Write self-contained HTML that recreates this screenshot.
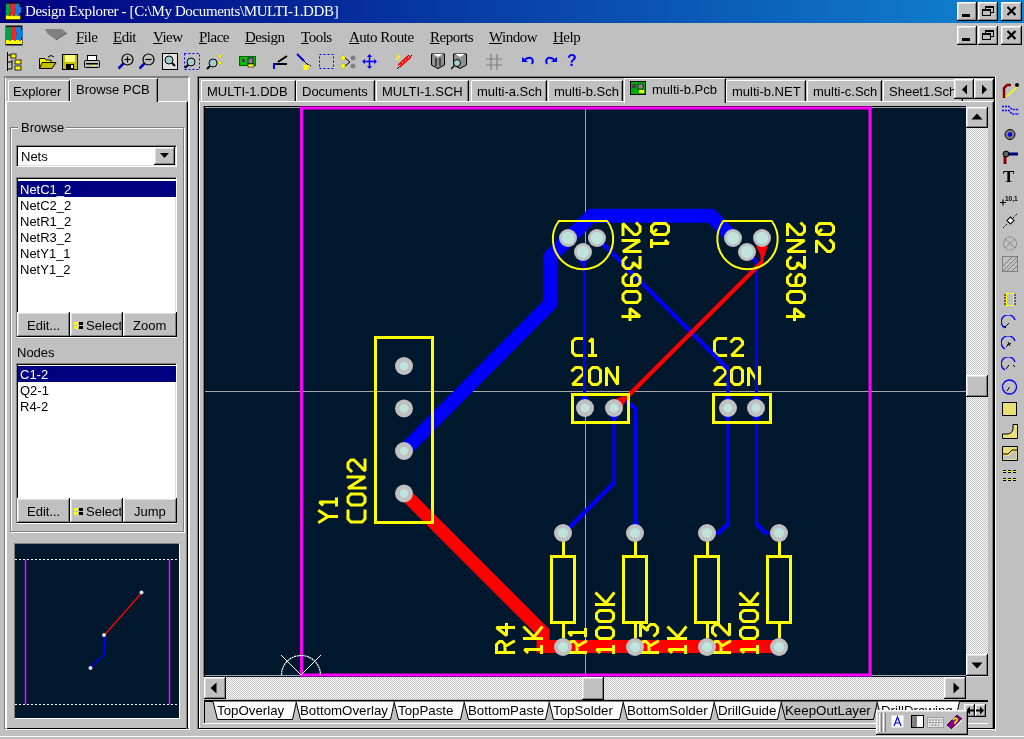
<!DOCTYPE html><html><head><meta charset="utf-8"><style>
*{margin:0;padding:0;box-sizing:border-box}
html,body{width:1024px;height:739px;overflow:hidden;background:#c0c0c0;position:relative}
div,span,svg{position:absolute}
span{will-change:transform;white-space:nowrap;font:13px "Liberation Sans",sans-serif;color:#000;line-height:15px}
.rz{background:#c0c0c0;box-shadow:inset -1px -1px 0 #000,inset 1px 1px 0 #fff,inset -2px -2px 0 #808080,inset 2px 2px 0 #dfdfdf}
.sk{box-shadow:inset 1px 1px 0 #808080,inset -1px -1px 0 #fff,inset 2px 2px 0 #000,inset -2px -2px 0 #dfdfdf}
.sv{font:15px "Liberation Serif",serif;letter-spacing:-0.4px;line-height:17px}
u{text-decoration:underline;text-underline-offset:1px}
</style></head><body>
<div style="left:0px;top:0px;width:1024px;height:23px;background:linear-gradient(to right,#000080,#1084d0)"></div>
<span style="left:25px;top:3px;color:#fff;font:15px Liberation Serif,serif;letter-spacing:-0.37px;line-height:17px">Design Explorer - [C:\My Documents\MULTI-1.DDB]</span>
<div class="rz" style="left:957px;top:2px;width:20px;height:19px;"></div>
<div class="rz" style="left:978px;top:2px;width:20px;height:19px;"></div>
<div class="rz" style="left:1001px;top:2px;width:21px;height:19px;"></div>
<div class="rz" style="left:957px;top:26px;width:20px;height:19px;"></div>
<div class="rz" style="left:978px;top:26px;width:20px;height:19px;"></div>
<div class="rz" style="left:1001px;top:26px;width:21px;height:19px;"></div>
<div style="left:962px;top:14px;width:8px;height:3px;background:#000"></div>
<div style="left:985px;top:6px;width:9px;height:7px;border:1px solid #000;border-top-width:2px"></div>
<div style="left:982px;top:9px;width:9px;height:7px;border:1px solid #000;border-top-width:2px;background:#c0c0c0"></div>
<svg style="left:1006px;top:6px" width="11" height="10" viewBox="0 0 11 10"><path d="M1.5 1 L9.5 9 M9.5 1 L1.5 9" stroke="#000" stroke-width="2.2"/></svg>
<div style="left:962px;top:38px;width:8px;height:3px;background:#000"></div>
<div style="left:985px;top:30px;width:9px;height:7px;border:1px solid #000;border-top-width:2px"></div>
<div style="left:982px;top:33px;width:9px;height:7px;border:1px solid #000;border-top-width:2px;background:#c0c0c0"></div>
<svg style="left:1006px;top:30px" width="11" height="10" viewBox="0 0 11 10"><path d="M1.5 1 L9.5 9 M9.5 1 L1.5 9" stroke="#000" stroke-width="2.2"/></svg>
<svg style="left:4px;top:2px" width="19" height="19" viewBox="0 0 19 21"><rect x="0.5" y="0.5" width="17" height="20" fill="#111"/><path d="M1 2H6V7L7 9L6 11V15H1Z" fill="#00a050"/><path d="M6 2H11V7L12 9L11 11V15H6V11L7 9L6 7Z" fill="#ff2020"/><path d="M11 2H16V5L18 6V12L16 12V15H11V11L12 9L11 7Z" fill="#1080e0"/><path d="M1 15H4L5 16L6 15H9L10 16L11 15H14L15 16L16 15H17V19H1Z" fill="#ff0"/></svg>
<svg style="left:5px;top:25px" width="19" height="21" viewBox="0 0 19 21"><rect x="0.5" y="0.5" width="17" height="20" fill="#111"/><path d="M1 2H6V7L7 9L6 11V15H1Z" fill="#00a050"/><path d="M6 2H11V7L12 9L11 11V15H6V11L7 9L6 7Z" fill="#ff2020"/><path d="M11 2H16V5L18 6V12L16 12V15H11V11L12 9L11 7Z" fill="#1080e0"/><path d="M1 15H4L5 16L6 15H9L10 16L11 15H14L15 16L16 15H17V19H1Z" fill="#ff0"/></svg>
<svg style="left:44px;top:28px" width="24" height="13"><path d="M1 1H18L23 5L12 12L3 5Z" fill="#808080"/><path d="M12 12L23 5" stroke="#303030" stroke-width="1" stroke-dasharray="1.5 1"/></svg>
<svg style="left:6px;top:52px" width="16" height="19" viewBox="0 0 16 19"><path d="M1.5 0V19M1.5 3H5M1.5 10H6M1.5 17H6M6 8V17" stroke="#000" stroke-width="1" fill="none"/><rect x="5" y="2" width="5" height="4" fill="#ff0" stroke="#000" stroke-width="0.8"/><rect x="9" y="8" width="6" height="4" fill="#ff0" stroke="#000" stroke-width="0.8"/><rect x="9" y="14" width="6" height="4" fill="#ff0" stroke="#000" stroke-width="0.8"/></svg>
<svg style="left:39px;top:54px" width="18" height="15" viewBox="0 0 18 15"><path d="M0.5 4.5H6L7 6H12V14.5H0.5Z" fill="#ff0" stroke="#000" stroke-width="1"/><path d="M3 8.5H17L13 14.5H0.5Z" fill="#c0c000" stroke="#000" stroke-width="1"/><path d="M9 3Q12 0 15 3" stroke="#000" fill="none"/></svg>
<svg style="left:62px;top:54px" width="16" height="16" viewBox="0 0 16 16"><rect x="0.5" y="0.5" width="15" height="15" fill="#c0c000" stroke="#000"/><rect x="3" y="1" width="10" height="7" fill="#ffff80"/><rect x="4" y="10" width="8" height="5" fill="#000"/><rect x="9" y="11" width="2" height="3" fill="#fff"/></svg>
<svg style="left:84px;top:55px" width="16" height="14" viewBox="0 0 16 14"><rect x="3.5" y="0.5" width="9" height="5" fill="#fff" stroke="#000"/><rect x="0.5" y="5.5" width="15" height="7" rx="1" fill="#c0c0c0" stroke="#000"/><rect x="2" y="8" width="12" height="1.5" fill="#000"/><rect x="8" y="10" width="4" height="1" fill="#ff0"/></svg>
<svg style="left:117px;top:53px" width="17" height="17" viewBox="0 0 17 17"><circle cx="10.5" cy="6.5" r="5.5" fill="#c0c0c0" stroke="#000" stroke-width="1.2"/><path d="M7.5 6.5H13.5M10.5 3.5V9.5" stroke="#000" stroke-width="1.2"/><path d="M6.5 10.5L1.5 15.5" stroke="#0000c0" stroke-width="2.5"/></svg>
<svg style="left:138px;top:53px" width="17" height="17" viewBox="0 0 17 17"><circle cx="10.5" cy="6.5" r="5.5" fill="#c0c0c0" stroke="#000" stroke-width="1.2"/><path d="M7.5 6.5H13.5" stroke="#000" stroke-width="1.2"/><path d="M6.5 10.5L1.5 15.5" stroke="#0000c0" stroke-width="2.5"/></svg>
<svg style="left:162px;top:53px" width="16" height="17" viewBox="0 0 16 17"><rect x="0.5" y="0.5" width="15" height="16" fill="#e0e0e0" stroke="#000"/><circle cx="7" cy="7" r="4" fill="#a0d0d0" stroke="#000"/><path d="M10 10L13 13" stroke="#000" stroke-width="2"/></svg>
<svg style="left:184px;top:53px" width="16" height="17" viewBox="0 0 16 17"><rect x="0.5" y="0.5" width="15" height="16" fill="none" stroke="#00f" stroke-dasharray="2 2"/><circle cx="7" cy="9" r="4" fill="#a0d0d0" stroke="#000"/><path d="M4 12L1 15" stroke="#000" stroke-width="2"/></svg>
<svg style="left:206px;top:53px" width="17" height="17" viewBox="0 0 17 17"><circle cx="7" cy="10" r="4" fill="#a0d0d0" stroke="#000"/><path d="M4 13L1 16" stroke="#000" stroke-width="2"/><path d="M14 1L16 3L14 5L12 3Z M14 8L16 10L14 12L12 10Z" fill="#ff0" stroke="#aa0" stroke-width="0.5"/></svg>
<svg style="left:239px;top:56px" width="17" height="12" viewBox="0 0 17 12"><rect x="0.5" y="0.5" width="16" height="9" fill="#00c000" stroke="#006000"/><rect x="3" y="3" width="3" height="3" fill="#404040"/><rect x="9" y="2" width="5" height="6" fill="#808080" stroke="#000" stroke-width="0.7"/><rect x="9" y="8" width="6" height="3" fill="#ff0" stroke="#000" stroke-width="0.6"/></svg>
<svg style="left:273px;top:53px" width="15" height="17" viewBox="0 0 15 17"><path d="M14 3L5 9M1 11H14" stroke="#000" stroke-width="2"/><path d="M1 10V16" stroke="#00f" stroke-width="2"/></svg>
<svg style="left:296px;top:53px" width="16" height="18" viewBox="0 0 16 18"><path d="M1 1L8 8" stroke="#00c" stroke-width="2"/><path d="M8 8L11 11L15 13" stroke="#000" stroke-width="1" fill="none"/><path d="M7 12H14L11 17H8Z" fill="#ff0"/></svg>
<svg style="left:319px;top:54px" width="15" height="15" viewBox="0 0 15 15"><rect x="0.5" y="0.5" width="14" height="14" fill="none" stroke="#00f" stroke-dasharray="2 2"/></svg>
<svg style="left:340px;top:55px" width="16" height="14" viewBox="0 0 16 14"><circle cx="3" cy="3" r="2.5" fill="#ff0" stroke="#888" stroke-width="0.5"/><circle cx="3" cy="11" r="2.5" fill="#ff0" stroke="#888" stroke-width="0.5"/><circle cx="13" cy="3" r="2.5" fill="#808080"/><circle cx="13" cy="11" r="2.5" fill="#808080"/><path d="M5 3L10 7L5 11" stroke="#000" fill="none"/></svg>
<svg style="left:362px;top:54px" width="15" height="15" viewBox="0 0 15 15"><path d="M7.5 1V14M1 7.5H14" stroke="#00f" stroke-width="1.5"/><path d="M7.5 0L5 3H10Z M7.5 15L5 12H10Z M0 7.5L3 5V10Z M15 7.5L12 5V10Z" fill="#00f"/></svg>
<svg style="left:395px;top:53px" width="18" height="18" viewBox="0 0 18 18"><path d="M2 16L17 2" stroke="#000" stroke-width="1"/><path d="M4 13L15 3" stroke="#f00" stroke-width="4"/><path d="M4 13L15 3" stroke="#fff" stroke-width="1" stroke-dasharray="2 2"/><path d="M1 3L5 5M3 1L5 4M0 6L4 6" stroke="#ff0" stroke-width="1"/></svg>
<svg style="left:431px;top:53px" width="14" height="16" viewBox="0 0 14 16"><path d="M0.5 1H13.5V12L7 15.5L0.5 12Z" fill="#909090" stroke="#000"/><path d="M2 1L7 4L12 1" fill="#fff"/><path d="M5 5V13M9 5V13" stroke="#000"/></svg>
<svg style="left:451px;top:53px" width="16" height="17" viewBox="0 0 16 17"><path d="M2.5 1H15.5V12L9 15.5L2.5 12Z" fill="#909090" stroke="#000"/><path d="M4 1L9 4L14 1" fill="#fff"/><circle cx="6" cy="10" r="3.5" fill="#a0d0d0" stroke="#000"/><path d="M3 13L0 16" stroke="#000" stroke-width="1.5"/></svg>
<svg style="left:486px;top:54px" width="16" height="16" viewBox="0 0 16 16"><path d="M5 0V16M11 0V16M0 5H16M0 11H16" stroke="#808080" stroke-width="1.2"/></svg>
<svg style="left:522px;top:56px" width="13" height="10" viewBox="0 0 13 10"><path d="M3 3.5Q6 1 9 2Q12 4 10 8" stroke="#00f" stroke-width="2" fill="none"/><path d="M0 1L6 6H0Z" fill="#00f"/></svg>
<svg style="left:543px;top:56px" width="14" height="10" viewBox="0 0 14 10"><path d="M11 3.5Q8 1 5 2Q2 4 4 8" stroke="#00f" stroke-width="2" fill="none"/><path d="M14 1L8 6H14Z" fill="#00f"/></svg>
<span style="left:567px;top:52px;font:bold 16px Liberation Sans,sans-serif;color:#00f;line-height:18px">?</span>
<span style="left:76px;top:29px;font:15px Liberation Serif,serif;letter-spacing:-0.5px;line-height:17px"><u>F</u>ile</span>
<span style="left:113px;top:29px;font:15px Liberation Serif,serif;letter-spacing:-0.5px;line-height:17px"><u>E</u>dit</span>
<span style="left:153px;top:29px;font:15px Liberation Serif,serif;letter-spacing:-0.5px;line-height:17px"><u>V</u>iew</span>
<span style="left:199px;top:29px;font:15px Liberation Serif,serif;letter-spacing:-0.5px;line-height:17px"><u>P</u>lace</span>
<span style="left:245px;top:29px;font:15px Liberation Serif,serif;letter-spacing:-0.5px;line-height:17px"><u>D</u>esign</span>
<span style="left:301px;top:29px;font:15px Liberation Serif,serif;letter-spacing:-0.5px;line-height:17px"><u>T</u>ools</span>
<span style="left:349px;top:29px;font:15px Liberation Serif,serif;letter-spacing:-0.5px;line-height:17px"><u>A</u>uto Route</span>
<span style="left:430px;top:29px;font:15px Liberation Serif,serif;letter-spacing:-0.5px;line-height:17px"><u>R</u>eports</span>
<span style="left:489px;top:29px;font:15px Liberation Serif,serif;letter-spacing:-0.5px;line-height:17px"><u>W</u>indow</span>
<span style="left:553px;top:29px;font:15px Liberation Serif,serif;letter-spacing:-0.5px;line-height:17px"><u>H</u>elp</span>
__TOOLBAR__
<div style="left:4px;top:76px;width:186px;height:654px;border-left:1px solid #808080;border-top:1px solid #808080;border-right:1px solid #fff;border-bottom:1px solid #fff"></div>
<div style="left:5px;top:77px;width:184px;height:652px;border-left:1px solid #fff;border-top:1px solid #808080;border-right:1px solid #fff;border-bottom:1px solid #000"></div>
<div style="left:6px;top:101px;width:182px;height:628px;border-left:1px solid #fff;border-top:1px solid #fff;border-right:1px solid #000;box-shadow:inset -1px 0 0 #808080"></div>
<div style="left:8px;top:80px;width:62px;height:21px;border-left:1px solid #fff;border-top:1px solid #fff;border-right:1px solid #000;box-shadow:inset -1px 0 0 #808080;border-top-left-radius:2px"></div>
<span style="left:13px;top:84px;">Explorer</span>
<div style="left:70px;top:78px;width:88px;height:24px;background:#c0c0c0;border-left:1px solid #fff;border-top:1px solid #fff;border-right:1px solid #000;box-shadow:inset -1px 0 0 #808080;border-top-left-radius:2px"></div>
<span style="left:76px;top:82px;">Browse PCB</span>
<div style="left:10px;top:127px;width:174px;height:405px;border:1px solid #808080;box-shadow:1px 1px 0 #fff,inset 1px 1px 0 #fff"></div>
<div style="left:18px;top:120px;width:48px;height:14px;background:#c0c0c0"></div>
<span style="left:21px;top:120px;">Browse</span>
<div style="left:16px;top:145px;width:161px;height:22px;background:#fff;border-left:1px solid #808080;border-top:1px solid #808080;border-right:1px solid #fff;border-bottom:1px solid #fff;box-shadow:inset 1px 1px 0 #000,inset -1px -1px 0 #dfdfdf"></div>
<span style="left:21px;top:149px;">Nets</span>
<div class="rz" style="left:154px;top:147px;width:21px;height:18px;"></div>
<svg style="left:159px;top:153px" width="11" height="6"><path d="M1 0h9l-4.5 5z" fill="#000"/></svg>
<div style="left:16px;top:177px;width:161px;height:161px;background:#fff;border-left:1px solid #808080;border-top:1px solid #808080;border-right:1px solid #fff;border-bottom:1px solid #fff;box-shadow:inset 1px 1px 0 #000,inset -1px -1px 0 #dfdfdf"></div>
<div style="left:18px;top:181px;width:158px;height:16px;background:#000080"></div>
<span style="left:20px;top:182px;color:#fff">NetC1_2</span>
<span style="left:20px;top:198px;color:#000">NetC2_2</span>
<span style="left:20px;top:214px;color:#000">NetR1_2</span>
<span style="left:20px;top:230px;color:#000">NetR3_2</span>
<span style="left:20px;top:246px;color:#000">NetY1_1</span>
<span style="left:20px;top:262px;color:#000">NetY1_2</span>
<div class="rz" style="left:17px;top:312px;width:53px;height:25px;"></div>
<div class="rz" style="left:70px;top:312px;width:53px;height:25px;"></div>
<div class="rz" style="left:123px;top:312px;width:54px;height:25px;"></div>
<span style="left:27px;top:318px;">Edit...</span>
<div style="left:74px;top:322px;width:4px;height:3px;background:#ff0;box-shadow:0 4px 0 #ff0"></div>
<div style="left:79px;top:322px;width:4px;height:3px;background:#000;box-shadow:0 4px 0 #000"></div>
<div style="left:86px;top:318px;width:35px;height:16px;overflow:hidden"><span style="left:0;top:0">Select</span></div>
<span style="left:133px;top:318px;">Zoom</span>
<span style="left:17px;top:345px;">Nodes</span>
<div style="left:16px;top:363px;width:161px;height:161px;background:#fff;border-left:1px solid #808080;border-top:1px solid #808080;border-right:1px solid #fff;border-bottom:1px solid #fff;box-shadow:inset 1px 1px 0 #000,inset -1px -1px 0 #dfdfdf"></div>
<div style="left:18px;top:366px;width:158px;height:16px;background:#000080"></div>
<span style="left:20px;top:367px;color:#fff">C1-2</span>
<span style="left:20px;top:383px;color:#000">Q2-1</span>
<span style="left:20px;top:399px;color:#000">R4-2</span>
<div class="rz" style="left:17px;top:498px;width:53px;height:25px;"></div>
<div class="rz" style="left:70px;top:498px;width:53px;height:25px;"></div>
<div class="rz" style="left:123px;top:498px;width:54px;height:25px;"></div>
<span style="left:27px;top:504px;">Edit...</span>
<div style="left:74px;top:508px;width:4px;height:3px;background:#ff0;box-shadow:0 4px 0 #ff0"></div>
<div style="left:79px;top:508px;width:4px;height:3px;background:#000;box-shadow:0 4px 0 #000"></div>
<div style="left:86px;top:504px;width:35px;height:16px;overflow:hidden"><span style="left:0;top:0">Select</span></div>
<span style="left:134px;top:504px;">Jump</span>
<div style="left:14px;top:543px;width:166px;height:176px;background:#00182e;border-left:1px solid #808080;border-top:1px solid #808080;border-right:1px solid #fff;border-bottom:1px solid #fff"></div>
<svg style="left:15px;top:544px" width="164" height="174">
<path d="M0 15.5H164M0 160.5H164" stroke="#fff" stroke-width="1" stroke-dasharray="2 2"/>
<path d="M10.5 15V161M154.5 15V161" stroke="#f0f" stroke-width="1.5"/>
<path d="M126.5 49L89.5 91" stroke="#f00" stroke-width="1.3"/>
<path d="M89.5 91V110L75.5 124" stroke="#00f" stroke-width="1.6" fill="none"/>
<circle cx="126.5" cy="48.5" r="2" fill="#ddd"/><circle cx="89" cy="91" r="2" fill="#ddd"/><circle cx="75.5" cy="124" r="2" fill="#ddd"/>
</svg>
<div style="left:197px;top:76px;width:799px;height:654px;border-left:1px solid #808080;border-top:1px solid #808080;border-right:1px solid #fff;border-bottom:1px solid #fff"></div>
<div style="left:198px;top:77px;width:797px;height:652px;border-left:1px solid #000;border-top:1px solid #000;border-right:1px solid #000;border-bottom:1px solid #000"></div>
<div style="left:199px;top:101px;width:795px;height:627px;border-left:1px solid #fff;border-top:1px solid #fff;border-right:1px solid #000;box-shadow:inset -1px 0 0 #808080"></div>
<div style="left:201px;top:80px;width:95px;height:21px;border-left:1px solid #fff;border-top:1px solid #fff;border-right:1px solid #000;box-shadow:inset -1px 0 0 #808080;border-top-left-radius:2px;overflow:hidden"><span style="left:5px;top:3px">MULTI-1.DDB</span></div>
<div style="left:296px;top:80px;width:79px;height:21px;border-left:1px solid #fff;border-top:1px solid #fff;border-right:1px solid #000;box-shadow:inset -1px 0 0 #808080;border-top-left-radius:2px;overflow:hidden"><span style="left:5px;top:3px">Documents</span></div>
<div style="left:376px;top:80px;width:93px;height:21px;border-left:1px solid #fff;border-top:1px solid #fff;border-right:1px solid #000;box-shadow:inset -1px 0 0 #808080;border-top-left-radius:2px;overflow:hidden"><span style="left:5px;top:3px">MULTI-1.SCH</span></div>
<div style="left:471px;top:80px;width:76px;height:21px;border-left:1px solid #fff;border-top:1px solid #fff;border-right:1px solid #000;box-shadow:inset -1px 0 0 #808080;border-top-left-radius:2px;overflow:hidden"><span style="left:5px;top:3px">multi-a.Sch</span></div>
<div style="left:548px;top:80px;width:75px;height:21px;border-left:1px solid #fff;border-top:1px solid #fff;border-right:1px solid #000;box-shadow:inset -1px 0 0 #808080;border-top-left-radius:2px;overflow:hidden"><span style="left:5px;top:3px">multi-b.Sch</span></div>
<div style="left:726px;top:80px;width:80px;height:21px;border-left:1px solid #fff;border-top:1px solid #fff;border-right:1px solid #000;box-shadow:inset -1px 0 0 #808080;border-top-left-radius:2px;overflow:hidden"><span style="left:5px;top:3px">multi-b.NET</span></div>
<div style="left:807px;top:80px;width:75px;height:21px;border-left:1px solid #fff;border-top:1px solid #fff;border-right:1px solid #000;box-shadow:inset -1px 0 0 #808080;border-top-left-radius:2px;overflow:hidden"><span style="left:5px;top:3px">multi-c.Sch</span></div>
<div style="left:883px;top:80px;width:80px;height:21px;border-left:1px solid #fff;border-top:1px solid #fff;border-right:1px solid #000;box-shadow:inset -1px 0 0 #808080;border-top-left-radius:2px;overflow:hidden"><span style="left:5px;top:3px">Sheet1.Sch</span></div>
<div style="left:624px;top:78px;width:102px;height:25px;background:#c0c0c0;border-left:1px solid #fff;border-top:1px solid #fff;border-right:1px solid #000;box-shadow:inset -1px 0 0 #808080;border-top-left-radius:2px"></div>
<svg style="left:630px;top:81px" width="16" height="14"><rect x="0.5" y="0.5" width="15" height="13" fill="#0a0" stroke="#000"/><rect x="2" y="3" width="4" height="4" fill="#444"/><rect x="8" y="3" width="5" height="5" fill="#888" stroke="#000" stroke-width="0.6"/><rect x="9" y="9" width="5" height="3" fill="#ff0"/></svg>
<span style="left:652px;top:82px;">multi-b.Pcb</span>
<div class="rz" style="left:954px;top:79px;width:20px;height:20px;"></div>
<div class="rz" style="left:974px;top:79px;width:20px;height:20px;"></div>
<svg style="left:960px;top:84px" width="10" height="11"><path d="M7 0.5v10l-5-5z" fill="#000"/></svg>
<svg style="left:980px;top:84px" width="10" height="11"><path d="M2 0.5v10l5-5z" fill="#000"/></svg>
<div style="left:203px;top:106px;width:764px;height:572px;border-left:1px solid #808080;border-top:1px solid #808080;border-right:1px solid #fff;border-bottom:1px solid #fff"></div>
<div style="left:966px;top:107px;width:22px;height:570px;background-color:#e0e0e0;background-image:repeating-conic-gradient(#c0c0c0 0 25%,#fff 0 50%);background-size:2px 2px"></div>
<div class="rz" style="left:966px;top:107px;width:22px;height:21px;"></div>
<svg style="left:971px;top:113px" width="12" height="7"><path d="M0.5 6.5h11l-5.5-6z" fill="#000"/></svg>
<div class="rz" style="left:966px;top:375px;width:22px;height:22px;"></div>
<div class="rz" style="left:966px;top:654px;width:22px;height:22px;"></div>
<svg style="left:971px;top:662px" width="12" height="7"><path d="M0.5 0.5h11l-5.5 6z" fill="#000"/></svg>
<div style="left:204px;top:677px;width:762px;height:22px;background-color:#e0e0e0;background-image:repeating-conic-gradient(#c0c0c0 0 25%,#fff 0 50%);background-size:2px 2px"></div>
<div class="rz" style="left:204px;top:677px;width:22px;height:22px;"></div>
<svg style="left:210px;top:682px" width="7" height="12"><path d="M6.5 0.5v11l-6-5.5z" fill="#000"/></svg>
<div class="rz" style="left:582px;top:677px;width:22px;height:23px;"></div>
<div class="rz" style="left:944px;top:677px;width:22px;height:22px;"></div>
<svg style="left:953px;top:682px" width="7" height="12"><path d="M0.5 0.5v11l6-5.5z" fill="#000"/></svg>
<div style="left:966px;top:677px;width:22px;height:22px;background:#c0c0c0"></div>
<div style="left:204px;top:700px;width:784px;height:2px;background:#000"></div>
<div style="left:204px;top:702px;width:1px;height:21px;background:#000"></div>
<div style="left:203px;top:723px;width:785px;height:1px;background:#fff"></div>
<svg style="left:204px;top:700px" width="784" height="24" viewBox="204 700 784 24"><path d="M213 701.5L217.5 719.5H292.5L296.5 701.5" fill="#fff" stroke="#000" stroke-width="1"/><path d="M296 701.5L300.5 719.5H390.5L394.5 701.5" fill="#fff" stroke="#000" stroke-width="1"/><path d="M394 701.5L398.5 719.5H460.5L464.5 701.5" fill="#fff" stroke="#000" stroke-width="1"/><path d="M464 701.5L468.5 719.5H545.5L549.5 701.5" fill="#fff" stroke="#000" stroke-width="1"/><path d="M549 701.5L553.5 719.5H619.5L623.5 701.5" fill="#fff" stroke="#000" stroke-width="1"/><path d="M623 701.5L627.5 719.5H710.5L714.5 701.5" fill="#fff" stroke="#000" stroke-width="1"/><path d="M714 701.5L718.5 719.5H777.5L781.5 701.5" fill="#fff" stroke="#000" stroke-width="1"/><path d="M781 701.5L785.5 719.5H873.5L877.5 701.5" fill="#c0c0c0" stroke="#000" stroke-width="1"/><path d="M877 701.5L881.5 719.5H955.5L959.5 701.5" fill="#fff" stroke="#000" stroke-width="1"/></svg>
<span style="left:217px;top:703px;font-size:13.3px;line-height:16px">TopOverlay</span>
<span style="left:300px;top:703px;font-size:13.3px;line-height:16px">BottomOverlay</span>
<span style="left:398px;top:703px;font-size:13.3px;line-height:16px">TopPaste</span>
<span style="left:468px;top:703px;font-size:13.3px;line-height:16px">BottomPaste</span>
<span style="left:553px;top:703px;font-size:13.3px;line-height:16px">TopSolder</span>
<span style="left:627px;top:703px;font-size:13.3px;line-height:16px">BottomSolder</span>
<span style="left:718px;top:703px;font-size:13.3px;line-height:16px">DrillGuide</span>
<span style="left:785px;top:703px;font-size:13.3px;line-height:16px">KeepOutLayer</span>
<span style="left:881px;top:703px;font-size:13.3px;line-height:16px">DrillDrawing</span>
<div class="rz" style="left:964px;top:704px;width:11px;height:13px;"></div>
<div class="rz" style="left:975px;top:704px;width:11px;height:13px;"></div>
<svg style="left:965px;top:706px" width="20" height="9"><path d="M1 4.5L5 0.5V8.5Z M5 3.5H9V5.5H5Z M19 4.5L15 0.5V8.5Z M11 3.5H15V5.5H11Z" fill="#000"/></svg>
<div class="rz" style="left:876px;top:710px;width:92px;height:25px;"></div>
<div style="left:879px;top:713px;width:3px;height:19px;border-left:1px solid #fff;border-right:1px solid #808080"></div>
<div style="left:883px;top:713px;width:3px;height:19px;border-left:1px solid #fff;border-right:1px solid #808080"></div>
<svg style="left:891px;top:715px" width="13" height="14"><rect x="0" y="0" width="13" height="13" fill="#fff" stroke="#c0c0c0"/><path d="M3 11L6.5 2L10 11M4.5 8H8.5" stroke="#00f" stroke-width="1.2" fill="none"/></svg>
<svg style="left:911px;top:715px" width="13" height="14"><rect x="0.5" y="0.5" width="12" height="12" fill="#fff" stroke="#000"/><rect x="1" y="1" width="5" height="11" fill="#808080"/></svg>
<svg style="left:927px;top:717px" width="17" height="11"><rect x="0.5" y="0.5" width="16" height="10" fill="#e0e0e0" stroke="#a0a0a0"/><path d="M2 3H15M2 5.5H15M4 8H13" stroke="#808080" stroke-dasharray="2 1"/></svg>
<svg style="left:946px;top:714px" width="17" height="16"><path d="M1 11L11 1L16 5L6 15Z" fill="#800080" stroke="#400040"/><path d="M6 15L16 5V7L6 16Z" fill="#fff"/><path d="M7 6Q9 3 11 5Q12 7 9 8V10" stroke="#ff0" stroke-width="1.5" fill="none"/></svg>
<div style="left:0px;top:736px;width:1024px;height:1px;background:#fff"></div>
<svg style="left:204px;top:106px" width="762" height="571" viewBox="204 106 762 571">
<rect x="204" y="106" width="762" height="571" fill="#00182e"/>
<path d="M204 106.5H966M204.5 106V677" stroke="#000" stroke-width="1"/>
<path d="M205 107.5H966M205 675.5H966" stroke="#a8a0b0" stroke-width="1"/>
<path d="M585.5 107V677M205 391.5H966" stroke="#a8a8a8" stroke-width="1"/>
<path d="M301.5 108V675M870 108V675M300 108H872M300 675H872" stroke="#f0f" stroke-width="3" fill="none"/>
<path d="M281.5 675A19.5 19.5 0 0 1 320.5 675" stroke="#fff" stroke-width="1.2" fill="none" stroke-dasharray="2 0.6"/>
<path d="M281 655L301 675L321 655" stroke="#fff" stroke-width="1" fill="none"/>
<g stroke="#ff0" fill="none" stroke-width="3" stroke-linejoin="miter" stroke-miterlimit="1.5" stroke-linecap="square">
<path transform="translate(572.5 338.5)" d="M11 0H3L0 3V14L3 17H11"/><path transform="translate(589.5 338.5)" d="M0.5 2.5L3 0V17M0 17H6"/>
<path transform="translate(572.5 367.5)" d="M0 3L3 0H8L11 3V6L0 17H11"/><path transform="translate(589.5 367.5)" d="M3 0H8L11 3V14L8 17H3L0 14V3Z"/><path transform="translate(606.5 367.5)" d="M0 17V0L11 17V0"/>
<path transform="translate(714.5 338.5)" d="M11 0H3L0 3V14L3 17H11"/><path transform="translate(731.5 338.5)" d="M0 3L3 0H8L11 3V6L0 17H11"/>
<path transform="translate(714.5 367.5)" d="M0 3L3 0H8L11 3V6L0 17H11"/><path transform="translate(731.5 367.5)" d="M3 0H8L11 3V14L8 17H3L0 14V3Z"/><path transform="translate(748.5 367.5)" d="M0 17V0L11 17V0"/>
</g>
<g stroke="#00f" fill="none" stroke-linejoin="miter">
<path d="M404 451L550 304V257L591.5 215.8H711L733 238" stroke-width="14"/>
</g>
<path d="M584.5 252V408 M728 369V524 M719 533H707 M756.5 261.5V524 M765.5 533H779 M614 408V483 M635.5 409V533" stroke="#00f" stroke-width="3" stroke-linecap="square"/>
<path d="M597 238L728 369 M728 524L719 533 M747 252L756.5 261.5 M756.5 524L765.5 533 M614 483L563 534 M622 397L635.5 409" stroke="#00f" stroke-width="4.2"/>
<path d="M577 257H589L583 267Z M608 413H620L614 423Z M722 413H734L728 423Z M750.5 413H762.5L756.5 423Z M722 403H734L728 393Z M750.5 403H762.5L756.5 393Z M578.5 403H590.5L584.5 393Z M629.5 528H641.5L635.5 518Z" fill="#00f"/>
<g stroke="#f00" fill="none" stroke-linejoin="miter">
<path d="M404 493L543 632V646.5H779" stroke-width="13"/>
<path d="M762 238V262" stroke-width="3"/>
<path d="M762 262L614 410" stroke-width="4.2"/>
</g>
<path d="M756 246H768L763 260Z M608 402L628 394L620 414Z" fill="#f00"/>
<g stroke="#ff0" fill="none" stroke-width="3" stroke-linejoin="miter" stroke-miterlimit="1.5" stroke-linecap="square">
<path transform="translate(640 223.5) rotate(90)" d="M0 3L3 0H8L11 3V6L0 17H11"/><path transform="translate(640 240.5) rotate(90)" d="M0 17V0L11 17V0"/><path transform="translate(640 257.5) rotate(90)" d="M0 0H11L5 7H8L11 10V14L8 17H3L0 14"/><path transform="translate(640 274.5) rotate(90)" d="M11 8.5H3L0 5.5V3L3 0H8L11 3V14L8 17H3L0 14"/><path transform="translate(640 291.5) rotate(90)" d="M3 0H8L11 3V14L8 17H3L0 14V3Z"/><path transform="translate(640 308.5) rotate(90)" d="M8 17V0L0 10H11"/>
<path transform="translate(668.5 223.5) rotate(90)" d="M3 0H8L11 3V14L8 17H3L0 14V3ZM6.5 12.5L9.5 15.5"/><path transform="translate(668.5 240.5) rotate(90)" d="M0.5 2.5L3 0V17M0 17H6"/>
<path transform="translate(804.5 223.5) rotate(90)" d="M0 3L3 0H8L11 3V6L0 17H11"/><path transform="translate(804.5 240.5) rotate(90)" d="M0 17V0L11 17V0"/><path transform="translate(804.5 257.5) rotate(90)" d="M0 0H11L5 7H8L11 10V14L8 17H3L0 14"/><path transform="translate(804.5 274.5) rotate(90)" d="M11 8.5H3L0 5.5V3L3 0H8L11 3V14L8 17H3L0 14"/><path transform="translate(804.5 291.5) rotate(90)" d="M3 0H8L11 3V14L8 17H3L0 14V3Z"/><path transform="translate(804.5 308.5) rotate(90)" d="M8 17V0L0 10H11"/>
<path transform="translate(833.5 223.5) rotate(90)" d="M3 0H8L11 3V14L8 17H3L0 14V3ZM6.5 12.5L9.5 15.5"/><path transform="translate(833.5 240.5) rotate(90)" d="M0 3L3 0H8L11 3V6L0 17H11"/>
<path transform="translate(319.5 522) rotate(-90)" d="M0 0L5.5 8.5L11 0M5.5 8.5V17"/><path transform="translate(319.5 505) rotate(-90)" d="M0.5 2.5L3 0V17M0 17H6"/>
<path transform="translate(348 522) rotate(-90)" d="M11 0H3L0 3V14L3 17H11"/><path transform="translate(348 505) rotate(-90)" d="M3 0H8L11 3V14L8 17H3L0 14V3Z"/><path transform="translate(348 488) rotate(-90)" d="M0 17V0L11 17V0"/><path transform="translate(348 471) rotate(-90)" d="M0 3L3 0H8L11 3V6L0 17H11"/>
<path transform="translate(496.5 652.5) rotate(-90)" d="M0 17V0H8L11 3V5.5L8 8.5H0M6 8.5L11 17"/><path transform="translate(496.5 635.5) rotate(-90)" d="M8 17V0L0 10H11"/>
<path transform="translate(524.5 652.5) rotate(-90)" d="M0.5 2.5L3 0V17M0 17H6"/><path transform="translate(524.5 638.5) rotate(-90)" d="M0 0V17M11 0L1.5 9.5L11 17"/>
<path transform="translate(568.5 652.5) rotate(-90)" d="M0 17V0H8L11 3V5.5L8 8.5H0M6 8.5L11 17"/><path transform="translate(568.5 635.5) rotate(-90)" d="M0.5 2.5L3 0V17M0 17H6"/>
<path transform="translate(596.5 652.5) rotate(-90)" d="M0.5 2.5L3 0V17M0 17H6"/><path transform="translate(596.5 638.5) rotate(-90)" d="M3 0H8L11 3V14L8 17H3L0 14V3Z"/><path transform="translate(596.5 621.5) rotate(-90)" d="M3 0H8L11 3V14L8 17H3L0 14V3Z"/><path transform="translate(596.5 604.5) rotate(-90)" d="M0 0V17M11 0L1.5 9.5L11 17"/>
<path transform="translate(640.5 652.5) rotate(-90)" d="M0 17V0H8L11 3V5.5L8 8.5H0M6 8.5L11 17"/><path transform="translate(640.5 635.5) rotate(-90)" d="M0 0H11L5 7H8L11 10V14L8 17H3L0 14"/>
<path transform="translate(668.5 652.5) rotate(-90)" d="M0.5 2.5L3 0V17M0 17H6"/><path transform="translate(668.5 638.5) rotate(-90)" d="M0 0V17M11 0L1.5 9.5L11 17"/>
<path transform="translate(712.5 652.5) rotate(-90)" d="M0 17V0H8L11 3V5.5L8 8.5H0M6 8.5L11 17"/><path transform="translate(712.5 635.5) rotate(-90)" d="M0 3L3 0H8L11 3V6L0 17H11"/>
<path transform="translate(740.5 652.5) rotate(-90)" d="M0.5 2.5L3 0V17M0 17H6"/><path transform="translate(740.5 638.5) rotate(-90)" d="M3 0H8L11 3V14L8 17H3L0 14V3Z"/><path transform="translate(740.5 621.5) rotate(-90)" d="M3 0H8L11 3V14L8 17H3L0 14V3Z"/><path transform="translate(740.5 604.5) rotate(-90)" d="M0 0V17M11 0L1.5 9.5L11 17"/>
</g>
<g stroke="#ff0" fill="none">
<path d="M558.8 221A30.2 30.2 0 1 0 607.2 221Z" stroke-width="2"/>
<path d="M723.3 221A30.2 30.2 0 1 0 771.7 221Z" stroke-width="2"/>
<rect x="572.5" y="394.5" width="56" height="28" stroke-width="3"/>
<rect x="713.5" y="394.5" width="57" height="28" stroke-width="3"/>
<rect x="375.5" y="337.5" width="57" height="185" stroke-width="3"/>
<rect x="551.5" y="556.5" width="23" height="66" stroke-width="3"/>
<path d="M563.5 541V555M563.5 624V638" stroke-width="3"/>
<rect x="623.5" y="556.5" width="23" height="66" stroke-width="3"/>
<path d="M635.5 541V555M635.5 624V638" stroke-width="3"/>
<rect x="695.5" y="556.5" width="23" height="66" stroke-width="3"/>
<path d="M707.5 541V555M707.5 624V638" stroke-width="3"/>
<rect x="767.5" y="556.5" width="23" height="66" stroke-width="3"/>
<path d="M779.5 541V555M779.5 624V638" stroke-width="3"/>
</g>
<circle cx="568" cy="238" r="9" fill="#c0c0c0"/><circle cx="568" cy="238" r="6.2" fill="#bee4dc"/>
<circle cx="597" cy="238" r="9" fill="#c0c0c0"/><circle cx="597" cy="238" r="6.2" fill="#bee4dc"/>
<circle cx="583" cy="252" r="9" fill="#c0c0c0"/><circle cx="583" cy="252" r="6.2" fill="#bee4dc"/>
<circle cx="733" cy="238" r="9" fill="#c0c0c0"/><circle cx="733" cy="238" r="6.2" fill="#bee4dc"/>
<circle cx="762" cy="238" r="9" fill="#c0c0c0"/><circle cx="762" cy="238" r="6.2" fill="#bee4dc"/>
<circle cx="747" cy="252" r="9" fill="#c0c0c0"/><circle cx="747" cy="252" r="6.2" fill="#bee4dc"/>
<circle cx="585" cy="408" r="9" fill="#c0c0c0"/><circle cx="585" cy="408" r="4.4" fill="#bee4dc"/>
<circle cx="614" cy="408" r="9" fill="#c0c0c0"/><circle cx="614" cy="408" r="4.4" fill="#bee4dc"/>
<circle cx="728" cy="408" r="9" fill="#c0c0c0"/><circle cx="728" cy="408" r="4.4" fill="#bee4dc"/>
<circle cx="756" cy="408" r="9" fill="#c0c0c0"/><circle cx="756" cy="408" r="4.4" fill="#bee4dc"/>
<circle cx="404" cy="366" r="9" fill="#c0c0c0"/><circle cx="404" cy="366" r="4.2" fill="#bee4dc"/>
<circle cx="404" cy="408.5" r="9" fill="#c0c0c0"/><circle cx="404" cy="408.5" r="4.2" fill="#bee4dc"/>
<circle cx="404" cy="451" r="9" fill="#c0c0c0"/><circle cx="404" cy="451" r="4.2" fill="#bee4dc"/>
<circle cx="404" cy="493.5" r="9" fill="#c0c0c0"/><circle cx="404" cy="493.5" r="4.2" fill="#bee4dc"/>
<circle cx="563" cy="533" r="9" fill="#c0c0c0"/><circle cx="563" cy="533" r="5" fill="#bee4dc"/>
<circle cx="563" cy="647" r="9" fill="#c0c0c0"/><circle cx="563" cy="647" r="5" fill="#bee4dc"/>
<circle cx="635" cy="533" r="9" fill="#c0c0c0"/><circle cx="635" cy="533" r="5" fill="#bee4dc"/>
<circle cx="635" cy="647" r="9" fill="#c0c0c0"/><circle cx="635" cy="647" r="5" fill="#bee4dc"/>
<circle cx="707" cy="533" r="9" fill="#c0c0c0"/><circle cx="707" cy="533" r="5" fill="#bee4dc"/>
<circle cx="707" cy="647" r="9" fill="#c0c0c0"/><circle cx="707" cy="647" r="5" fill="#bee4dc"/>
<circle cx="779" cy="533" r="9" fill="#c0c0c0"/><circle cx="779" cy="533" r="5" fill="#bee4dc"/>
<circle cx="779" cy="647" r="9" fill="#c0c0c0"/><circle cx="779" cy="647" r="5" fill="#bee4dc"/>
</svg>
<svg style="left:1002px;top:82px" width="17" height="17" viewBox="0 0 17 17"><path d="M2 16V6L5 3H9" stroke="#a00000" stroke-width="2.5" fill="none"/><path d="M2 16V6L5 3H9" stroke="#000" stroke-width="1" stroke-dasharray="1 2" fill="none"/><path d="M4 15L16 4" stroke="#ff0" stroke-width="1.5"/><circle cx="15" cy="3" r="2" fill="#000"/></svg>
<svg style="left:1002px;top:105px" width="17" height="12" viewBox="0 0 17 12"><path d="M0 1.5H7L10 4.5H17M0 5.5H7L10 9H17" stroke="#00f" stroke-width="1.5" fill="none" stroke-dasharray="2 1"/></svg>
<svg style="left:1003px;top:128px" width="14" height="13" viewBox="0 0 14 13"><circle cx="7" cy="6.5" r="5" fill="#808080" stroke="#000"/><circle cx="7" cy="6.5" r="2.3" fill="#00f"/></svg>
<svg style="left:1002px;top:149px" width="17" height="15" viewBox="0 0 17 15"><path d="M3 6V15" stroke="#a00000" stroke-width="3"/><path d="M3 6V15" stroke="#000" stroke-width="1" stroke-dasharray="1 1.5"/><path d="M5 5H16" stroke="#000080" stroke-width="3"/><circle cx="4" cy="5" r="3" fill="#606060" stroke="#000"/></svg>
<span style="left:1003px;top:168px;font:bold 17px Liberation Serif,serif;color:#000;line-height:18px">T</span>
<svg style="left:1000px;top:195px" width="18" height="11" viewBox="0 0 18 11"><path d="M0 7.5H6M3 4.5V10.5" stroke="#000" stroke-width="1.2"/><text x="5" y="6" font-family="Liberation Sans" font-size="6.5" font-weight="bold">10,10</text></svg>
<svg style="left:1002px;top:212px" width="17" height="17" viewBox="0 0 17 17"><path d="M1 16L16 1" stroke="#000" stroke-dasharray="2 1.5"/><rect x="6" y="6" width="5" height="5" transform="rotate(45 8.5 8.5)" fill="#fff" stroke="#000"/></svg>
<svg style="left:1002px;top:236px" width="16" height="15" viewBox="0 0 16 15"><circle cx="8" cy="7.5" r="6.5" fill="none" stroke="#555" stroke-dasharray="1 1"/><path d="M3 3L13 12M13 3L3 12" stroke="#555" stroke-dasharray="1 1"/></svg>
<svg style="left:1002px;top:256px" width="17" height="17" viewBox="0 0 17 17"><rect x="0.5" y="0.5" width="15" height="15" fill="#c0c0c0" stroke="#808080"/><path d="M1 10L10 1M1 15L15 1M5 15L15 5M10 15L15 10" stroke="#808080"/></svg>
<svg style="left:1003px;top:293px" width="13" height="13" viewBox="0 0 13 13"><rect x="3.5" y="0.5" width="7" height="12" fill="none" stroke="#ff0"/><path d="M1 2H3M1 5H3M1 8H3M1 11H3M11 2H13M11 5H13M11 8H13M11 11H13" stroke="#000"/></svg>
<svg style="left:1001px;top:315px" width="17" height="16" viewBox="0 0 17 16"><path d="M4 13A7 7 0 1 1 14 5" stroke="#00f" stroke-width="1.3" fill="none"/><path d="M8 8L4 12M3 11L5 13" stroke="#000"/></svg>
<svg style="left:1001px;top:336px" width="17" height="16" viewBox="0 0 17 16"><path d="M4 13A7 7 0 1 1 14 5" stroke="#00f" stroke-width="1.3" fill="none"/><path d="M8 8L5 11M7 6L9 10M6 9L10 7" stroke="#000"/></svg>
<svg style="left:1001px;top:357px" width="17" height="16" viewBox="0 0 17 16"><path d="M4 13A7 7 0 1 1 14 5" stroke="#00f" stroke-width="1.3" fill="none"/><path d="M8 8L5 12M12 8L14 10" stroke="#000"/></svg>
<svg style="left:1001px;top:379px" width="17" height="16" viewBox="0 0 17 16"><circle cx="8.5" cy="8" r="7" stroke="#00f" stroke-width="1.3" fill="none"/><path d="M8.5 8L6 12" stroke="#000"/></svg>
<svg style="left:1002px;top:402px" width="15" height="14" viewBox="0 0 15 14"><rect x="0.5" y="0.5" width="14" height="13" fill="#e8e070" stroke="#000"/></svg>
<svg style="left:1002px;top:424px" width="16" height="15" viewBox="0 0 16 15"><path d="M0.5 10V14.5H15.5V0.5H11V5Q10 10 5 10Z" fill="#e8e070" stroke="#000"/></svg>
<svg style="left:1002px;top:446px" width="16" height="15" viewBox="0 0 16 15"><path d="M0.5 0.5H15.5V14.5H0.5Z" fill="#e8e070" stroke="#000"/><path d="M0.5 8H6L10 4H15.5" stroke="#000" fill="none"/><path d="M2 10H7L11 6H14V13H2Z" fill="#c0c0c0"/></svg>
<svg style="left:1002px;top:469px" width="15" height="14" viewBox="0 0 15 14"><path d="M1 2.5H14M1 10.5H14" stroke="#000" stroke-width="3" stroke-dasharray="3 2"/><path d="M1 2.5H14M1 10.5H14" stroke="#ff0" stroke-width="1" stroke-dasharray="3 2"/></svg>
<div style="left:995px;top:76px;width:1px;height:655px;background:#fff"></div>
</body></html>
